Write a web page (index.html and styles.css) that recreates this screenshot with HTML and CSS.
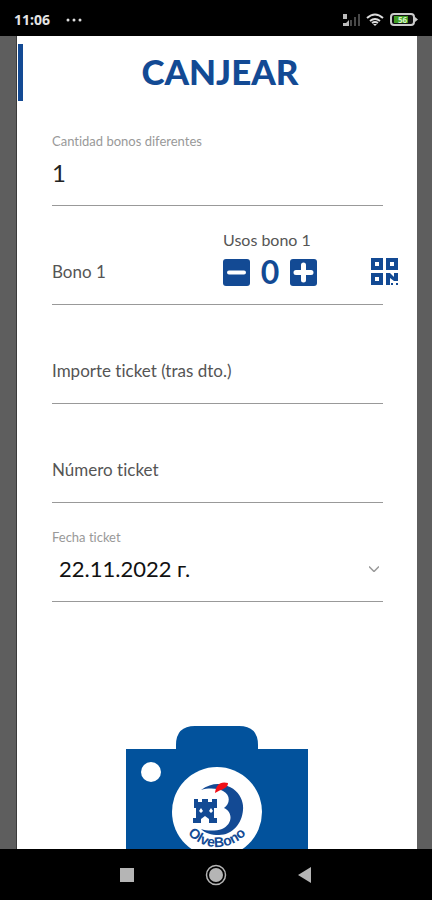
FILE: index.html
```html
<!DOCTYPE html>
<html lang="es">
<head>
<meta charset="utf-8">
<meta name="viewport" content="width=device-width, initial-scale=1">
<title>Canjear</title>
<link rel="stylesheet" href="styles.css">
</head>
<body>
<header class="status">
  <span class="clock">11:06</span>
  <svg class="dots" width="16" height="4" viewBox="0 0 16 4" fill="#ddd"><circle cx="2" cy="2" r="1.5"/><circle cx="8" cy="2" r="1.5"/><circle cx="14" cy="2" r="1.5"/></svg>
  <div class="indicators">
    <svg width="18" height="14" viewBox="0 0 18 14"><path d="M1 1h4v5H1zM1 10h3l3-3v6H1z" fill="#bbb"/><path d="M8 7h2v6H8zM12 4h2v9h-2zM16 1h2v12h-2z" fill="#484848"/></svg>
    <svg width="18" height="14" viewBox="0 0 18 14" fill="none" stroke="#ddd" stroke-width="2"><path d="M1 5Q9-2 17 5M4 8q5-4 10 0M6 10q3-2 6 0"/><path d="M7 11h4l-2 2z" fill="#ddd" stroke="none"/></svg>
    <svg width="28" height="14" viewBox="0 0 28 14"><rect x="1" y="1" width="23" height="11" rx="3" fill="#111" stroke="#ccc" stroke-width="2"/><path d="M25 4l3 2.500-3 2.500z" fill="#ccc"/><path d="M4 3h14v7H4z" fill="#3f9b22"/><text x="8" y="10" class="charge">56</text></svg>
  </div>
</header>
<main class="screen">
  <div class="page">
    <div class="heading"><h1>CANJEAR</h1></div>
    <form class="form">
      <div class="field">
        <label class="caption" for="cantidad">Cantidad bonos diferentes</label>
        <input class="value" id="cantidad" value="1">
      </div>
      <div class="field inline">
        <label class="name" for="bono">Bono 1</label>
        <input class="value" id="bono">
        <div class="uses">
          <span class="uses-label" id="usos">Usos bono 1</span>
          <div class="stepper" role="group" aria-labelledby="usos">
            <button type="button" aria-label="Menos"><svg width="27" height="27" viewBox="0 0 27 27"><rect width="27" height="27" rx="3" fill="#134a94"/><path d="M6 13.500h15" stroke="#fff" stroke-width="4" stroke-linecap="round"/></svg></button>
            <output class="count">0</output>
            <button type="button" aria-label="Más"><svg width="27" height="27" viewBox="0 0 27 27"><rect width="27" height="27" rx="3" fill="#134a94"/><path d="M6 13.500h15M13.500 6v15" stroke="#fff" stroke-width="5" stroke-linecap="round"/></svg></button>
          </div>
        </div>
        <button type="button" class="scan" aria-label="Escanear código"><svg width="27" height="27" viewBox="0 0 27 27"><path d="M2 2h8v8H2zM17 2h8v8h-8zM2 17h8v8H2z" fill="none" stroke="#134a94" stroke-width="4"/><path d="M15 15h4l4 4v-4h4v8h-4l-4-3v7h-4zM20 25h2v2h-2zM25 25h2v2h-2z" fill="#134a94"/></svg></button>
      </div>
      <div class="field inline">
        <label class="name" for="importe">Importe ticket (tras dto.)</label>
        <input class="value" id="importe">
      </div>
      <div class="field inline">
        <label class="name" for="numero">Número ticket</label>
        <input class="value" id="numero">
      </div>
      <div class="field">
        <label class="caption" for="fecha">Fecha ticket</label>
        <div class="picker">
          <select class="value date" id="fecha"><option>22.11.2022 г.</option></select>
          <svg width="10" height="6" viewBox="0 0 10 6" fill="none" stroke="#999" stroke-width="1.500"><path d="M0 .5l5 5 5-5"/></svg>
        </div>
      </div>
    </form>
    <button type="button" class="camera" aria-label="Foto del ticket">
      <svg width="182" height="150" viewBox="0 0 182 150">
        <path d="M0 23h50V19Q50 0 69 0h44q19 0 19 19v4h50v127H0z" fill="#02529c"/>
        <circle cx="25" cy="46" r="10" fill="#fff"/>
        <circle cx="91" cy="86" r="45" fill="#fff"/>
        <path d="M75 64C83 58 92 57 98 59C112 62 118 74 117 84C116 98 106 109 93 109C85 109 79 107 75 103C81 105 90 105 96 103C107 98 107 86 98 82C104 78 105 69 97 65C91 62 82 62 75 64Z" fill="#134a94"/>
        <path d="M89 67c1-8 5-12 13-10 0 6-7 6-13 10z" fill="#f01018"/>
        <path d="M68 73h4v3h4v-3h6v3h4v-3h5v9h-3v10h3v5h-8v-4l-4-3-4 3v4h-8v-5h3V82h-2z" fill="#134a94"/>
        <path d="M73 85l2-3 2 3-2 2zM83 85l2-3 2 3-2 2z" fill="#fff"/>
        <path id="arc" d="M52 82a39 39 0 0 0 78 0" fill="none"/>
        <text class="brand"><textPath href="#arc" startOffset="50%">OlveBono</textPath></text>
      </svg>
    </button>
  </div>
</main>
<nav class="navbar">
  <button type="button" aria-label="Recientes"><svg width="24" height="24" viewBox="0 0 24 24"><path d="M5 5h14v14H5z" fill="#b5b5b5"/></svg></button>
  <button type="button" aria-label="Inicio"><svg width="24" height="24" viewBox="0 0 24 24"><circle cx="12" cy="12" r="9.500" fill="none" stroke="#b5b5b5" stroke-width="1.500"/><circle cx="12" cy="12" r="7" fill="#b5b5b5"/></svg></button>
  <button type="button" aria-label="Atrás"><svg width="24" height="24" viewBox="0 0 24 24"><path d="M18 4v16L5 12z" fill="#b5b5b5"/></svg></button>
</nav>
</body>
</html>
```
FILE: styles.css
```css
* { box-sizing: border-box; }
body {
  margin: 0;
  height: 100vh;
  display: flex;
  flex-direction: column;
  background: #000;
  font-family: Lato, "Noto Sans", sans-serif;
  font-variant-ligatures: none;
  color: #555;
}
button, input, select {
  font: inherit;
  color: inherit;
  border: 0;
  padding: 0;
  background: none;
}
svg { display: block; }
.status {
  flex: none;
  height: 36px;
  display: flex;
  align-items: center;
  gap: 16px;
  padding: 4px 14px 0;
}
.clock {
  font: bold 14px/16px "Noto Sans", sans-serif;
  color: #e4e4e4;
}
.indicators {
  margin-left: auto;
  display: flex;
  gap: 6px;
}
.charge {
  font: bold 8px "Noto Sans", sans-serif;
  fill: #d8f5c8;
}
.screen {
  flex: 1;
  min-height: 0;
  display: flex;
  padding: 0 15px 0 16px;
  background: #5e5e5e;
}
.page {
  flex: 1;
  overflow-y: auto;
  scrollbar-width: none;
  background: #fff;
  border-left: 1px solid #3c3c3c;
}
.heading {
  height: 57px;
  margin: 8px 0 6px 1px;
  padding-bottom: 4px;
  border-left: 5px solid #134a94;
  display: flex;
  justify-content: center;
  align-items: center;
}
h1 {
  margin: 0;
  font-size: 35px;
  line-height: 40px;
  font-weight: 900;
  color: #134a94;
}
.form { padding: 0 34px 0 35px; }
.field {
  height: 99px;
  display: flex;
  flex-direction: column;
  justify-content: flex-end;
  gap: 8px;
  padding-bottom: 16px;
  border-bottom: 1px solid #999;
}
.inline {
  flex-direction: row;
  justify-content: flex-start;
  align-items: flex-end;
}
.caption {
  font-size: 13px;
  line-height: 16px;
  color: #999;
}
.name {
  font-size: 17px;
  line-height: 32px;
  white-space: nowrap;
}
.value {
  min-width: 0;
  height: 32px;
  font-size: 24px;
  line-height: 32px;
  color: #222;
}
.inline .value { flex: 1; }
.uses {
  display: flex;
  flex-direction: column;
  gap: 8px;
}
.uses-label {
  font-size: 16px;
  line-height: 16px;
}
.stepper {
  display: flex;
  align-items: center;
  gap: 8px;
}
.count {
  width: 24px;
  text-align: center;
  font-size: 32px;
  line-height: 32px;
  font-weight: 700;
  color: #134a94;
}
.scan {
  margin: 0 -15px 3px 46px;
}
.picker {
  display: flex;
  align-items: center;
  padding: 0 4px 0 7px;
}
.date {
  flex: 1;
  appearance: none;
  font-size: 22px;
  color: #111;
}
.camera {
  display: block;
  margin: 124px auto 24px;
}
.brand {
  font: bold 14px "Liberation Sans", sans-serif;
  fill: #134a94;
  text-anchor: middle;
}
.navbar {
  flex: none;
  height: 51px;
  display: flex;
  justify-content: center;
  align-items: center;
  gap: 65px;
}
```
